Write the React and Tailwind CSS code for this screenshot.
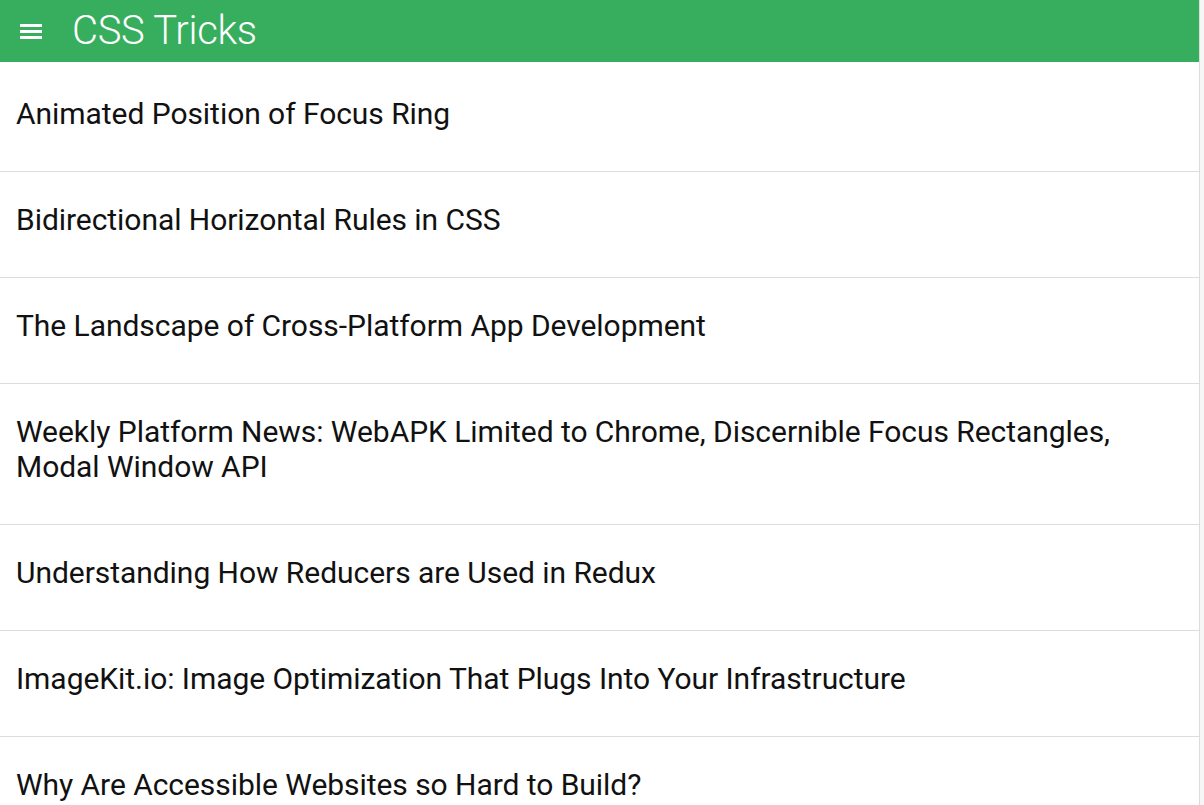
import React from 'react';

const posts = [
  'Animated Position of Focus Ring',
  'Bidirectional Horizontal Rules in CSS',
  'The Landscape of Cross-Platform App Development',
  'Weekly Platform News: WebAPK Limited to Chrome, Discernible Focus Rectangles, Modal Window API',
  'Understanding How Reducers are Used in Redux',
  'ImageKit.io: Image Optimization That Plugs Into Your Infrastructure',
  'Why Are Accessible Websites so Hard to Build?',
];

const App = () => {
  return (
    <div className="h-[805px] w-[1204px] overflow-hidden flex bg-[#f6f6f6]" style={{ fontFamily: 'Roboto, "Liberation Sans", sans-serif' }}>
      <div className="w-[1200px] border-r border-[#dcdcdc] bg-white flex flex-col">
        <header className="h-[62px] bg-[#37ae5e] flex items-center shrink-0">
          <div className="pl-5 pr-[30px] flex flex-col gap-[3px]">
            <span className="block w-[22px] h-[3px] bg-white" />
            <span className="block w-[22px] h-[3px] bg-white" />
            <span className="block w-[22px] h-[3px] bg-white" />
          </div>
          <h1 className="text-white text-[40px] font-light leading-none tracking-[-0.3px]">CSS Tricks</h1>
        </header>
        <ul>
          {posts.map((title, i) => (
            <li key={i} className={`border-b border-[#dddddd] px-[16px] pb-[40px] ${i === 0 ? 'pt-[34px]' : 'pt-[30px]'}`}>
              <a className="block text-[30px] leading-[35px] text-[#111111] tracking-[-0.05px] pr-[60px]">{title}</a>
            </li>
          ))}
        </ul>
      </div>
    </div>
  );
};

export default App;
